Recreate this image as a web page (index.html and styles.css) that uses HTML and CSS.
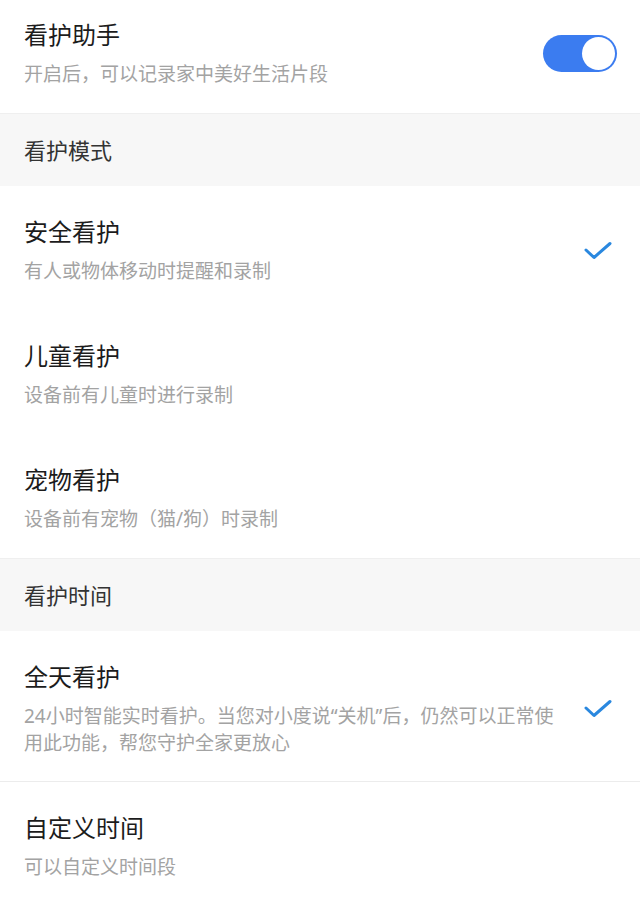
FILE: index.html
```html
<!DOCTYPE html>
<html lang="zh-CN">
<head>
  <meta charset="UTF-8">
  <meta name="viewport" content="width=device-width, initial-scale=1.0">
  <title>看护助手</title>
  <link rel="stylesheet" href="styles.css">
</head>
<body>

  <div class="settings">

    <div class="item item-top">
      <div class="item-text">
        <h3>看护助手</h3>
        <p>开启后，可以记录家中美好生活片段</p>
      </div>
      <div class="switch on"><span class="knob"></span></div>
    </div>

    <div class="section">看护模式</div>

    <div class="item">
      <div class="item-text">
        <h3>安全看护</h3>
        <p>有人或物体移动时提醒和录制</p>
      </div>
      <svg class="check" viewBox="0 0 28 20"><path d="M2 9 L10 16.5 L26 2.5"/></svg>
    </div>

    <div class="item">
      <div class="item-text">
        <h3>儿童看护</h3>
        <p>设备前有儿童时进行录制</p>
      </div>
      <span class="check-space"></span>
    </div>

    <div class="item">
      <div class="item-text">
        <h3>宠物看护</h3>
        <p>设备前有宠物（猫/狗）时录制</p>
      </div>
      <span class="check-space"></span>
    </div>

    <div class="section">看护时间</div>

    <div class="item item-line">
      <div class="item-text">
        <h3>全天看护</h3>
        <p>24小时智能实时看护。当您对小度说“关机”后，仍然可以正常使用此功能，帮您守护全家更放心</p>
      </div>
      <svg class="check" viewBox="0 0 28 20"><path d="M2 9 L10 16.5 L26 2.5"/></svg>
    </div>

    <div class="item">
      <div class="item-text">
        <h3>自定义时间</h3>
        <p>可以自定义时间段</p>
      </div>
      <span class="check-space"></span>
    </div>

  </div>

</body>
</html>
```

FILE: styles.css
```css
/* Reset */
body, h3, p {
    margin: 0;
    padding: 0;
}

body {
    font-family: 'Noto Sans', 'Noto Sans CJK SC', sans-serif;
    background: #ffffff;
    color: #1c1c1c;
}

.settings {
    width: 640px;
}

/* List rows */
.item {
    display: flex;
    align-items: center;
    gap: 18px;
    padding: 30px 28px 25px 24px;
    background: #ffffff;
}

.item-top {
    padding: 19px 23px 25px 24px;
}

.item-line {
    padding-bottom: 24px;
    border-bottom: 1px solid #ececec;
}

.item-text {
    flex: 1;
    min-width: 0;
}

.item-text h3 {
    font-size: 24px;
    font-weight: 400;
    line-height: 32px;
    color: #1c1c1c;
}

.item-text p {
    margin-top: 10px;
    font-size: 19px;
    line-height: 27px;
    color: #a3a3a3;
}

/* Section headers */
.section {
    height: 73px;
    display: flex;
    align-items: center;
    padding: 0 24px 2px;
    box-sizing: border-box;
    background: #f7f7f7;
    border-top: 1px solid #efefef;
    font-size: 22px;
    color: #333333;
}

/* Check mark */
.check {
    width: 28px;
    height: 20px;
    flex-shrink: 0;
}

.check path {
    fill: none;
    stroke: #2a88df;
    stroke-width: 3;
    stroke-linecap: round;
    stroke-linejoin: round;
}

.check-space {
    width: 28px;
    flex-shrink: 0;
}

/* Toggle switch */
.switch {
    width: 74px;
    height: 37px;
    border-radius: 19px;
    background: #3b7cf0;
    position: relative;
    flex-shrink: 0;
}

.switch .knob {
    position: absolute;
    top: 2px;
    right: 2px;
    width: 33px;
    height: 33px;
    border-radius: 50%;
    background: #ffffff;
}
```
